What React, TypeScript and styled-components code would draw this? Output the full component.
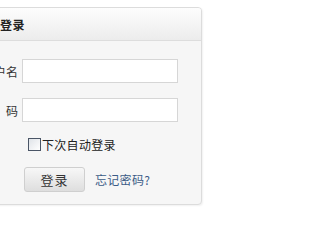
import React, { FC } from 'react';
import styled, { createGlobalStyle } from 'styled-components';

const GlobalStyle = createGlobalStyle`
  html, body {
    margin: 0;
    padding: 0;
    background: #ffffff;
    overflow: hidden;
  }
  body {
    font-family: "Noto Sans CJK SC", "Liberation Sans", sans-serif;
    font-size: 12px;
    color: #333333;
  }
`;

const Page = styled.div`
  width: 241px;
  height: 218px;
  padding-top: 7px;
  box-sizing: border-box;
`;

const Panel = styled.div`
  margin-left: -40px;
  width: 242px;
  border: 1px solid #dcdcdc;
  border-radius: 4px;
  background: #f6f6f6;
  box-shadow: 1px 1px 2px rgba(0, 0, 0, 0.06);
  box-sizing: border-box;
  overflow: hidden;
`;

const PanelHeader = styled.div`
  height: 32px;
  display: flex;
  align-items: center;
  padding-left: 39px;
  background: linear-gradient(#fdfdfd, #ececec);
  border-bottom: 1px solid #dddddd;
`;

const Title = styled.h3`
  margin: 0;
  font-size: 12px;
  font-weight: bold;
  color: #222222;
  letter-spacing: 0.5px;
`;

const Form = styled.form`
  display: flex;
  flex-direction: column;
  padding: 18px 0 12px 0;
`;

const Field = styled.div<{ $gap?: number }>`
  display: grid;
  grid-template-columns: 57px 156px;
  column-gap: 4px;
  align-items: center;
  margin-bottom: ${(p) => p.$gap ?? 15}px;
`;

const Label = styled.label`
  text-align: right;
  font-size: 12px;
  color: #333333;
  white-space: pre;
`;

const TextInput = styled.input`
  height: 24px;
  box-sizing: border-box;
  border: 1px solid #d6d6d6;
  background: #ffffff;
  padding: 0 4px;
  font-size: 12px;
  outline: none;
`;

const RememberRow = styled.label`
  display: flex;
  align-items: center;
  height: 14px;
  margin: 0 0 16px 67px;
  font-size: 12px;
  color: #222222;
  letter-spacing: 0.3px;
`;

const Check = styled.span`
  width: 11px;
  height: 11px;
  border: 1px solid #4a5566;
  background: linear-gradient(135deg, #dfe3e8, #ffffff);
  margin-right: 1px;
`;

const Actions = styled.div`
  display: flex;
  align-items: center;
  margin-left: 63px;
  gap: 10px;
`;

const SubmitButton = styled.button`
  width: 61px;
  height: 25px;
  border: 1px solid #cfcfcf;
  border-radius: 3px;
  background: linear-gradient(#f7f7f7, #dedede);
  font-family: "Noto Sans CJK SC", sans-serif;
  font-size: 13px;
  letter-spacing: 1px;
  color: #333333;
  padding: 0;
`;

const ForgotLink = styled.a`
  font-size: 12px;
  color: #3b5b86;
  text-decoration: none;
  letter-spacing: 0.3px;
`;

const LoginBox: FC = () => (
  <Panel>
    <PanelHeader>
      <Title>登录</Title>
    </PanelHeader>
    <Form onSubmit={(e) => e.preventDefault()}>
      <Field>
        <Label>用户名</Label>
        <TextInput type="text" />
      </Field>
      <Field>
        <Label>{'密    码'}</Label>
        <TextInput type="password" />
      </Field>
      <RememberRow>
        <Check />
        下次自动登录
      </RememberRow>
      <Actions>
        <SubmitButton type="submit">登录</SubmitButton>
        <ForgotLink href="#">忘记密码?</ForgotLink>
      </Actions>
    </Form>
  </Panel>
);

const App: FC = () => (
  <>
    <GlobalStyle />
    <Page>
      <LoginBox />
    </Page>
  </>
);

export default App;
